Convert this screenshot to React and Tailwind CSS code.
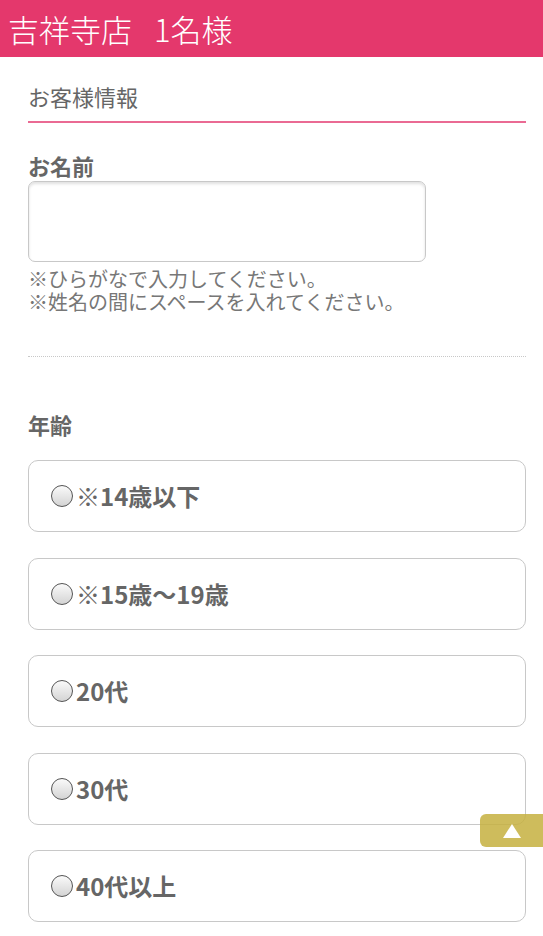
import React from 'react';

const AGES = ['※14歳以下', '※15歳〜19歳', '20代', '30代', '40代以上'];

const Radio = () => (
  <span className="inline-block w-[22px] h-[22px] rounded-full border-[1.5px] border-[#555] bg-gradient-to-b from-[#fafafa] to-[#d4d4d4] shrink-0" />
);

const App = () => {
  return (
    <div className="relative min-h-[936px] bg-white text-[#666] font-['Noto_Sans_CJK_JP','Noto_Sans',sans-serif]">
      <header className="h-[57px] flex items-center pl-[8px] bg-[#e4386c] text-white text-[31px] leading-none font-light">
        <span>吉祥寺店</span>
        <span className="ml-[22px]">1名様</span>
      </header>

      <main className="pl-[28px] pr-[17px]">
        <h2 className="mt-[23px] pb-[8px] text-[22px] leading-[33px] font-normal">
          お客様情報
        </h2>
        <div className="h-[1.5px] bg-[#ea6a93]" />

        <div className="mt-[27.5px]">
          <label className="block text-[22px] leading-[31px] font-bold">お名前</label>
          <input
            type="text"
            className="block w-[398px] h-[81px] rounded-[7px] border border-[#c8c8c8] shadow-[inset_0_2px_3px_rgba(0,0,0,0.12)] outline-none px-2"
          />
          <div className="mt-[5px] text-[20px] leading-[23px] text-[#777]">
            <p>※ひらがなで入力してください。</p>
            <p>※姓名の間にスペースを入れてください。</p>
          </div>
        </div>

        <div className="mt-[43px] border-t border-dotted border-[#c8c8c8]" />

        <div className="mt-[52px]">
          <label className="block text-[22px] leading-[31px] font-bold">年齢</label>
          <div className="mt-[20px] flex flex-col gap-[25.5px]">
            {AGES.map((age) => (
              <label
                key={age}
                className="h-[72px] flex items-center gap-[3px] pl-[22px] rounded-[10px] border border-[#c8c8c8] text-[24px] font-bold text-[#666]"
              >
                <Radio />
                <span>{age}</span>
              </label>
            ))}
          </div>
        </div>
      </main>

      <button className="absolute left-[480px] top-[814px] w-[63px] h-[33px] rounded-l-[6px] bg-[#c6b040]/85 flex items-center justify-center">
        <svg width="18" height="14" viewBox="0 0 18 14">
          <polygon points="9,0 18,14 0,14" fill="#fff" />
        </svg>
      </button>
    </div>
  );
};

export default App;
